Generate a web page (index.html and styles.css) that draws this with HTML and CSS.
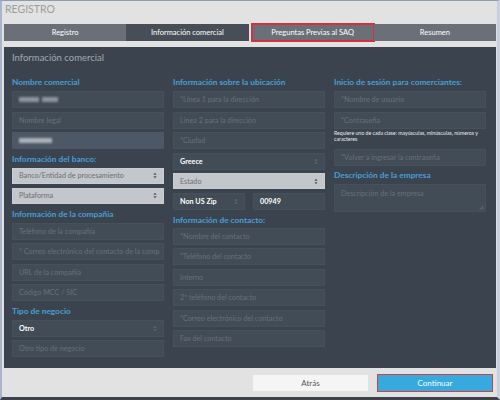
FILE: index.html
```html
<!DOCTYPE html>
<html lang="es">
<head>
    <meta charset="UTF-8">
    <title>Registro</title>
    <link rel="stylesheet" href="styles.css">
</head>
<body>
<div class="window">
    <div class="title">REGISTRO</div>

    <div class="tabs">
        <div class="tab">Registro</div>
        <div class="tab active">Información comercial</div>
        <div class="tab marked">Preguntas Previas al SAQ</div>
        <div class="tab">Resumen</div>
    </div>

    <div class="panel">
        <div class="panel-head">Información comercial</div>
        <div class="cols">
            <!-- columna 1 -->
            <div class="col">
                <h3>Nombre comercial</h3>
                <div class="field"><span class="blur w1"></span><span class="blur w2"></span></div>
                <div class="field">Nombre legal</div>
                <div class="field lit"><span class="blur w3"></span></div>

                <h3>Información del banco:</h3>
                <div class="select light">Banco/Entidad de procesamiento <svg viewBox="0 0 6 10"><path d="M3 1 L5.5 4 H0.5Z M3 9 L5.5 6 H0.5Z"/></svg></div>
                <div class="select light">Plataforma <svg viewBox="0 0 6 10"><path d="M3 1 L5.5 4 H0.5Z M3 9 L5.5 6 H0.5Z"/></svg></div>

                <h3>Información de la compañia</h3>
                <div class="field">Teléfono de la compañía</div>
                <div class="field">* Correo electrónico del contacto de la comp</div>
                <div class="field">URL de la compañía</div>
                <div class="field">Código MCC / SIC</div>

                <h3>Tipo de negocio</h3>
                <div class="select dark">Otro <svg viewBox="0 0 6 10"><path d="M3 1 L5.5 4 H0.5Z M3 9 L5.5 6 H0.5Z"/></svg></div>
                <div class="field">Otro tipo de negocio</div>
            </div>

            <!-- columna 2 -->
            <div class="col">
                <h3>Información sobre la ubicación</h3>
                <div class="field">*Línea 1 para la dirección</div>
                <div class="field">Línea 2 para la dirección</div>
                <div class="field">*Ciudad</div>
                <div class="select dark">Greece <svg viewBox="0 0 6 10"><path d="M3 1 L5.5 4 H0.5Z M3 9 L5.5 6 H0.5Z"/></svg></div>
                <div class="select light">Estado <svg viewBox="0 0 6 10"><path d="M3 1 L5.5 4 H0.5Z M3 9 L5.5 6 H0.5Z"/></svg></div>
                <div class="pair">
                    <div class="select dark">Non US Zip <svg viewBox="0 0 6 10"><path d="M3 1 L5.5 4 H0.5Z M3 9 L5.5 6 H0.5Z"/></svg></div>
                    <div class="field value">00949</div>
                </div>

                <h3 class="tight">Información de contacto:</h3>
                <div class="field">*Nombre del contacto</div>
                <div class="field">*Teléfono del contacto</div>
                <div class="field">Interno</div>
                <div class="field">2º teléfono del contacto</div>
                <div class="field">*Correo electrónico del contacto</div>
                <div class="field">Fax del contacto</div>
            </div>

            <!-- columna 3 -->
            <div class="col">
                <h3>Inicio de sesión para comerciantes:</h3>
                <div class="field">*Nombre de usuario</div>
                <div class="field nomargin">*Contraseña</div>
                <p class="hint">Requiere uno de cada clase: mayúsculas, minúsculas, números y caracteres</p>
                <div class="field">*Volver a ingresar la contraseña</div>

                <h3>Descripción de la empresa</h3>
                <div class="field area">Descripción de la empresa
                    <svg class="grip" viewBox="0 0 6 6"><path d="M5.5 1 L1 5.5 M5.5 3.5 L3.5 5.5"/></svg>
                </div>
            </div>
        </div>
    </div>

    <div class="footer">
        <button class="btn back">Atrás</button>
        <button class="btn next">Continuar</button>
    </div>
</div>
</body>
</html>
```

FILE: styles.css
```css
body {
    margin: 0;
    font-family: Lato, "Open Sans", sans-serif;
    background: #fff;
}
.window {
    width: 500px;
    height: 400px;
    box-sizing: border-box;
    background: #e2e2e2;
    border-top: 1px solid #8f9cb6;
    border-left: 2px solid #a9b5cd;
    border-right: 3px solid #c9d0dd;
    border-bottom: 3px solid #3e434b;
    display: flex;
    flex-direction: column;
}
.title {
    height: 23px;
    line-height: 17px;
    padding-left: 3px;
    font-size: 10.5px;
    color: #9d9d9d;
}
.tabs {
    display: flex;
    margin: 0 1px 0 2px;
    height: 17px;
}
.tab {
    flex: 1;
    background: #6b7078;
    color: #fff;
    font-size: 7.5px;
    line-height: 17px;
    text-align: center;
}
.tab.active {
    background: #484e57;
}
.tab.marked {
    margin-left: 3px;
    outline: 2px solid #d3313b;
    outline-offset: -1px;
}
.panel {
    margin: 6px 1px 0 2px;
    height: 321px;
    background: #3b444e;
    display: flex;
    flex-direction: column;
}
.panel-head {
    height: 23px;
    line-height: 22px;
    padding-left: 8px;
    font-size: 9.5px;
    color: #a2a9b1;
}
.cols {
    display: grid;
    grid-template-columns: repeat(3, minmax(0, 1fr));
    gap: 9px;
    padding: 6px 10px 0 8px;
}
.col {
    min-width: 0;
}
h3 {
    margin: 0 0 3px;
    line-height: 12px;
    font-size: 8.3px;
    font-weight: bold;
    color: #479fd6;
}
h3.tight {
    margin-bottom: 2px;
}
.field, .select {
    position: relative;
    height: 17px;
    box-sizing: border-box;
    margin-bottom: 3.5px;
    padding: 0 6px;
    background: #424c57;
    border: 1px solid #47515c;
    font-size: 7.2px;
    line-height: 15px;
    color: #66707b;
    white-space: nowrap;
    overflow: hidden;
    display: flex;
    align-items: center;
}
.field.lit {
    background: #4d5866;
    border-color: #4d5866;
}
.field.nomargin {
    margin-bottom: 1px;
}
.field.value {
    color: #fff;
    font-weight: bold;
}
.field.area {
    height: 28px;
    align-items: flex-start;
    padding-top: 1px;
}
.grip {
    position: absolute;
    right: 1px;
    bottom: 1px;
    width: 5px;
    height: 5px;
    stroke: #7d8690;
    stroke-width: 0.8;
    fill: none;
}
.blur {
    display: inline-block;
    height: 5px;
    margin-right: 3px;
    background: #8d959e;
    filter: blur(1.2px);
}
.w1 { width: 20px; }
.w2 { width: 16px; }
.w3 { width: 33px; background: #aab1b8; }
.select {
    justify-content: space-between;
}
.select svg {
    width: 4px;
    height: 7px;
    flex: none;
}
.select.light {
    height: 16px;
    background: #c3c6ca;
    border-color: #c9ccd0;
    color: #6c7075;
    margin-bottom: 4px;
}
.select.light svg {
    fill: #50555b;
}
.select.dark {
    color: #fff;
    font-weight: bold;
}
.select.dark svg {
    fill: #5e6873;
}
.pair {
    display: grid;
    grid-template-columns: repeat(2, minmax(0, 1fr));
    gap: 8px;
}
.hint {
    margin: 0 0 7px;
    font-size: 5.2px;
    line-height: 6px;
    color: #e8ecef;
}
.footer {
    flex: 1;
    display: flex;
    justify-content: flex-end;
    align-items: center;
    gap: 9px;
    padding-right: 4px;
}
.btn {
    font-family: Lato, "Open Sans", sans-serif;
    font-size: 8px;
    border: none;
    padding: 0;
    cursor: pointer;
}
.back {
    width: 115px;
    height: 16px;
    background: #f5f5f5;
    color: #555;
}
.next {
    width: 116px;
    height: 18px;
    background: #36a9de;
    color: #fff;
    border: 1.5px solid #d23f45;
}
```
